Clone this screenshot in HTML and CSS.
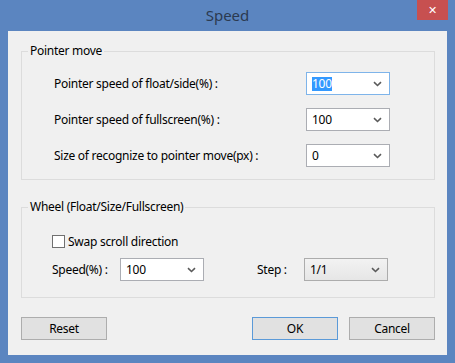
FILE: index.html
```html
<!DOCTYPE html>
<html lang="en">
<head>
    <meta charset="UTF-8">
    <meta name="viewport" content="width=device-width, initial-scale=1.0">
    <title>Speed</title>
    <link rel="stylesheet" href="styles.css">
</head>
<body>
    <div class="window">
        <div class="titlebar">
            <span></span>
            <h1 class="title">Speed</h1>
            <button class="close" type="button">&#x2715;</button>
        </div>

        <div class="client">
            <fieldset class="group">
                <legend>Pointer move</legend>
                <div class="group-body pointer-body">
                    <div class="row">
                        <label>Pointer speed of float/side(%) :</label>
                        <div class="combo focus">
                            <span class="value selected">100</span>
                            <svg class="arrow" width="9" height="6" viewBox="0 0 9 6"><path d="M1 1.2l3.5 3.3 3.5-3.3" fill="none" stroke="#5a5a5a" stroke-width="1.6"/></svg>
                        </div>
                    </div>
                    <div class="row">
                        <label>Pointer speed of fullscreen(%) :</label>
                        <div class="combo">
                            <span class="value">100</span>
                            <svg class="arrow" width="9" height="6" viewBox="0 0 9 6"><path d="M1 1.2l3.5 3.3 3.5-3.3" fill="none" stroke="#5a5a5a" stroke-width="1.6"/></svg>
                        </div>
                    </div>
                    <div class="row">
                        <label>Size of recognize to pointer move(px) :</label>
                        <div class="combo">
                            <span class="value">0</span>
                            <svg class="arrow" width="9" height="6" viewBox="0 0 9 6"><path d="M1 1.2l3.5 3.3 3.5-3.3" fill="none" stroke="#5a5a5a" stroke-width="1.6"/></svg>
                        </div>
                    </div>
                </div>
            </fieldset>

            <fieldset class="group group-wheel">
                <legend>Wheel (Float/Size/Fullscreen)</legend>
                <div class="group-body wheel-body">
                    <div class="check-row">
                        <span class="checkbox"></span>
                        <span>Swap scroll direction</span>
                    </div>
                    <div class="wheel-row">
                        <label class="speed-label">Speed(%) :</label>
                        <div class="combo">
                            <span class="value">100</span>
                            <svg class="arrow" width="9" height="6" viewBox="0 0 9 6"><path d="M1 1.2l3.5 3.3 3.5-3.3" fill="none" stroke="#5a5a5a" stroke-width="1.6"/></svg>
                        </div>
                        <label class="step-label">Step :</label>
                        <div class="combo list">
                            <span class="value">1/1</span>
                            <svg class="arrow" width="9" height="6" viewBox="0 0 9 6"><path d="M1 1.2l3.5 3.3 3.5-3.3" fill="none" stroke="#5a5a5a" stroke-width="1.6"/></svg>
                        </div>
                    </div>
                </div>
            </fieldset>

            <div class="buttons">
                <button class="btn" type="button">Reset</button>
                <span class="spacer"></span>
                <button class="btn btn-default" type="button">OK</button>
                <button class="btn" type="button">Cancel</button>
            </div>
        </div>
    </div>
</body>
</html>
```

FILE: styles.css
```css
* { margin: 0; padding: 0; box-sizing: border-box; }
body { width: 455px; height: 363px; background: #5b85c0; font-family: "Noto Sans", "Open Sans", sans-serif; font-size: 12px; letter-spacing: -0.27px; color: #000; overflow: hidden; }
.window { width: 455px; height: 363px; display: flex; flex-direction: column; }
.titlebar { height: 31px; display: grid; grid-template-columns: 1fr auto 1fr; align-items: start; }
.title { font-size: 15px; font-weight: normal; letter-spacing: 0; color: #2b3a50; line-height: 31px; }
.close { justify-self: end; margin-right: 7px; width: 31px; height: 20px; background: #c75050; color: #fff; border: none; font-size: 11px; font-weight: bold; font-family: "DejaVu Sans", sans-serif; }
.client { margin: 0 8px; height: 324px; background: #f0f0f0; padding: 12px 12px 0 13px; }
.group { border: 1px solid #dcdcdc; width: 414px; padding: 0; }
.group legend { margin-left: 6px; padding: 0 2px; line-height: 16px; }
.pointer-body { padding: 13px 0 12px 32px; }
.row { display: grid; grid-template-columns: 252px 84px; align-items: center; height: 23px; }
.row + .row { margin-top: 13px; }
.combo { height: 23px; width: 84px; background: #fff; border: 1px solid #abadb3; display: flex; align-items: center; justify-content: space-between; padding: 0 7px 0 5px; }
.combo.focus { border-color: #7eb4ea; }
.combo.list { background: linear-gradient(#f2f2f2, #e6e6e6); border-color: #acacac; }
.value { line-height: 14px; }
.selected { background: #3399ff; color: #fff; }
.group-wheel { margin-top: 19px; }
.wheel-body { padding: 18px 0 16px 30px; }
.check-row { display: flex; align-items: center; height: 16px; gap: 3px; }
.checkbox { width: 13px; height: 13px; border: 1px solid #707070; background: #fff; }
.wheel-row { display: flex; align-items: center; margin-top: 9px; }
.speed-label { width: 68px; }
.step-label { margin-left: 53px; width: 47px; }
.buttons { display: flex; margin-top: 19px; gap: 11px; }
.spacer { flex: 1; }
.btn { width: 86px; height: 23px; background: #e1e1e1; border: 1px solid #adadad; font-family: "Noto Sans", "Open Sans", sans-serif; font-size: 12px; letter-spacing: -0.27px; color: #000; }
.btn-default { border-color: #5b9ad8; }
```
